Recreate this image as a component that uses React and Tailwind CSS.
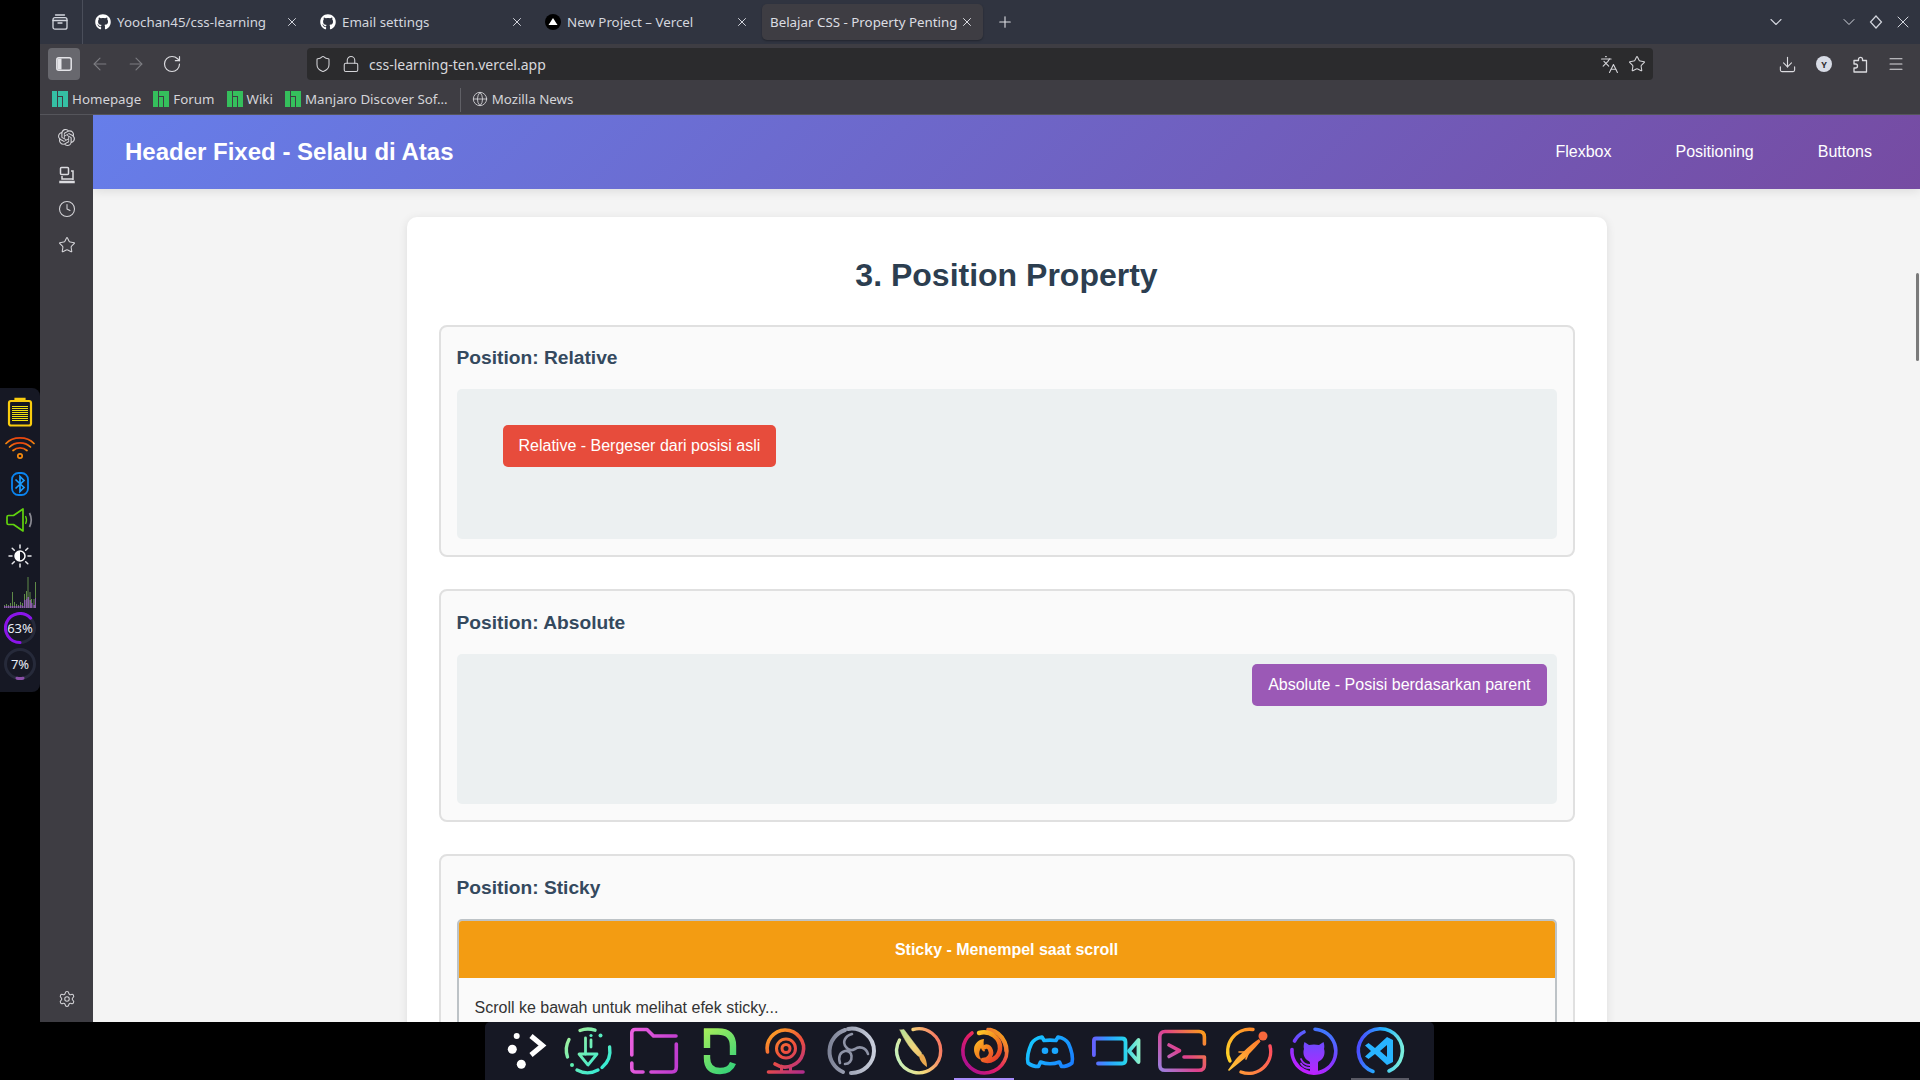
import React from "react";
import { ArrowLeft, ArrowRight, RotateCw, Shield, Lock, Languages, Star, Download, Menu, Clock, Settings, ChevronDown, X, Plus, Globe } from "lucide-react";
import { FaGithub } from "react-icons/fa";
import { SiOpenai } from "react-icons/si";

function Grad({ id, stops, x1 = 0, y1 = 0, x2 = 48, y2 = 48 }) {
  return (
    <linearGradient id={id} gradientUnits="userSpaceOnUse" x1={x1} y1={y1} x2={x2} y2={y2}>
      {stops.map((c, i) => (
        <stop key={i} offset={i / (stops.length - 1)} stopColor={c} />
      ))}
    </linearGradient>
  );
}

function DockSvg({ children }) {
  return (
    <svg width="48" height="48" viewBox="0 0 48 48" fill="none" strokeLinecap="round" strokeLinejoin="round" className="shrink-0 overflow-visible">
      {children}
    </svg>
  );
}

function IconLauncher() {
  return (
    <DockSvg>
      <g transform="translate(4 0)">
        <circle cx="14.7" cy="9" r="3" fill="#fff" />
        <circle cx="10.3" cy="22.3" r="4.5" fill="#fff" />
        <circle cx="19.3" cy="37.3" r="4.5" fill="#fff" />
        <path d="M29 9 L40.5 18.5 L29 28" stroke="#fff" strokeWidth="5" strokeLinecap="butt" strokeLinejoin="miter" />
      </g>
    </DockSvg>
  );
}

function IconDownload() {
  return (
    <DockSvg>
      <defs><Grad id="g-dl" stops={["#a8f09a", "#2bead9"]} x1={4} y1={4} x2={44} y2={44} /></defs>
      <g stroke="url(#g-dl)" strokeWidth="3.4">
        <path d="M16 3.5 A22 22 0 0 1 31 3.2" />
        <path d="M3.5 30 A22 22 0 0 1 5 12.5" />
        <path d="M38 40.5 A22 22 0 0 0 45.6 20" />
        <path d="M13 43 A22 22 0 0 0 34 43" />
        <path d="M21.5 11 V27 M27 13 V20" strokeWidth="2.8" />
        <path d="M15 27 H33 L24 38 Z" strokeWidth="2.8" />
      </g>
      <circle cx="36.5" cy="8.5" r="2" fill="#58ecc0" />
      <circle cx="8" cy="38" r="2" fill="#5ef0b0" />
      <circle cx="27" cy="8.5" r="1.6" fill="#58ecc0" />
    </DockSvg>
  );
}

function IconFolder() {
  return (
    <DockSvg>
      <defs><Grad id="g-fo" stops={["#e85ede", "#bf3ccf"]} x1={0} y1={20} x2={48} y2={30} /></defs>
      <g stroke="url(#g-fo)" strokeWidth="3.6">
        <path d="M1.8 28 V6 Q1.8 2.5 5 2.5 H17 L23.5 9 H46" />
        <path d="M46.3 17 V40 Q46.3 45 42 45 H21" />
        <path d="M13 45 H6 Q1.8 45 1.8 41 V36" />
      </g>
    </DockSvg>
  );
}

function IconGreen() {
  return (
    <DockSvg>
      <defs><Grad id="g-gr" stops={["#a4ec5c", "#2fd07a"]} x1={8} y1={4} x2={40} y2={44} /></defs>
      <g stroke="url(#g-gr)" strokeWidth="6.4" strokeLinecap="butt">
        <path d="M11 1.5 V21 M8 4.5 H22 Q37 4.5 37 19 V28" />
        <path d="M11 28 V31 Q11 44 24 44 Q34 44 37 36" />
      </g>
    </DockSvg>
  );
}

function IconWebcam() {
  return (
    <DockSvg>
      <defs><Grad id="g-wc" stops={["#ffb020", "#f0503c", "#b02c8c"]} x1={6} y1={2} x2={40} y2={46} /></defs>
      <g stroke="url(#g-wc)" strokeWidth="3.6">
        <path d="M5.500 25 A18.500 18.500 0 0 1 23 3 A18.500 18.500 0 1 1 13 37" />
        <circle cx="24" cy="21.500" r="9.500" strokeWidth="3" />
        <circle cx="24" cy="21.500" r="4" strokeWidth="3" />
        <path d="M19.500 39 V44 M28.500 39 V44" strokeWidth="3" />
        <path d="M6.500 45 H41" strokeWidth="3.600" />
      </g>
    </DockSvg>
  );
}

function IconObs() {
  return (
    <DockSvg>
      <defs><Grad id="g-ob" stops={["#7f8498", "#c9cedc"]} x1={2} y1={24} x2={46} y2={24} /></defs>
      <g stroke="url(#g-ob)">
        <path d="M17 3 A22.5 22.5 0 0 0 15 45" strokeWidth="4" />
        <path d="M23 46 A22.5 22.5 0 0 0 46 24 A22.5 22.5 0 0 0 20 1.9" strokeWidth="4" />
      </g>
      <g stroke="#8e93a6" strokeWidth="2.600">
        <path d="M24 7 C17 9 14 15 18 20 C20 23 23 24 27 22 C31 19 38 20 40 27" />
        <path d="M12 36 C10 30 12 25 17 24 C20 23.500 23 25 23.500 29 C24 34 21 37 17 37" />
      </g>
    </DockSvg>
  );
}

function IconBrush() {
  return (
    <DockSvg>
      <defs>
        <Grad id="g-br" stops={["#c2f3c0", "#f5d97a", "#f87b62"]} x1={2} y1={34} x2={46} y2={20} />
        <Grad id="g-br2" stops={["#b4e49a", "#f2d47a", "#e9a84e"]} x1={6} y1={3} x2={33} y2={40} />
      </defs>
      <path d="M19 2.500 A22 22 0 1 1 5.500 13" stroke="url(#g-br)" strokeWidth="3.400" />
      <path d="M6 3 L10 2.500 L27 25 C29 28 27.500 31 24 29 C18 24 10 13 6 3 Z" fill="url(#g-br2)" stroke="#d7cf8a" strokeWidth="0.500" />
      <path d="M25 29 L29 27 C32 31 33 36 33 40 C30 38 26 35 25 29 Z" fill="#e9a84e" />
    </DockSvg>
  );
}

function IconFirefox() {
  return (
    <DockSvg>
      <defs>
        <Grad id="g-ff" stops={["#f6a21c", "#e61f63", "#a80e94"]} x1={44} y1={8} x2={6} y2={42} />
        <Grad id="g-ff2" stops={["#ffd12a", "#f58a1f", "#e83b2d"]} x1={12} y1={8} x2={36} y2={34} />
      </defs>
      <path d="M12 6 A22 22 0 1 0 30 2.500" stroke="url(#g-ff)" strokeWidth="3.600" />
      <path d="M28 2.500 A22 22 0 0 1 46 24" stroke="url(#g-ff)" strokeWidth="3.600" />
      <path d="M19 6 C30 3 41 11 40 22 C39 31 30 36 23 33 C29 33 33 27 30 22 C29 20 27 19 25 20" stroke="url(#g-ff2)" strokeWidth="4.500" />
      <path d="M24 12 C20 12 14 16 14 22 C14 28 17 32 22 33 C18 29 19 24 21 21 C22 24 24 25 25 24 C24 20 23 16 24 12 Z" fill="url(#g-ff2)" />
    </DockSvg>
  );
}

function IconDiscord() {
  return (
    <DockSvg>
      <defs><Grad id="g-dc" stops={["#16d0ff", "#1a7bff"]} x1={2} y1={8} x2={46} y2={40} /></defs>
      <path d="M16 10 C11 11 7.500 13 5.500 16.500 C2 24 1 31 2 36 C5 38.500 9 39.500 12.500 39.500 L14.500 35 C20 37 28 37 33.500 35 L35.500 39.500 C39 39.500 43 38.500 46 36 C47 31 46 24 42.500 16.500 C40.500 13 37 11 32 10 L30 13.500 C26 13 22 13 18 13.500 Z" stroke="url(#g-dc)" strokeWidth="3.600" />
      <circle cx="19" cy="23.700" r="3.300" fill="#1aa8ff" />
      <circle cx="29" cy="23.700" r="3.300" fill="#1aa8ff" />
    </DockSvg>
  );
}

function IconVideo() {
  return (
    <DockSvg>
      <defs><Grad id="g-vd" stops={["#6a5cff", "#2f9cff", "#23d0f0", "#90f0c8"]} x1={0} y1={24} x2={48} y2={24} /></defs>
      <g stroke="url(#g-vd)" strokeWidth="3.800">
        <path d="M1.900 28 V14 Q1.900 11.500 4 11.500 H30 Q33.500 11.500 33.500 15 V33 Q33.500 36.500 30 36.500 H6" />
        <path d="M37 24 L46.500 13 V35 Z" />
      </g>
    </DockSvg>
  );
}

function IconTerminal() {
  return (
    <DockSvg>
      <defs><Grad id="g-tm" stops={["#9a80e0", "#e0408c", "#fb9a1c"]} x1={2} y1={44} x2={46} y2={6} /></defs>
      <g stroke="url(#g-tm)" strokeWidth="3.600">
        <path d="M46.400 17 V10 Q46.400 4.500 41 4.500 H7 Q1.800 4.500 1.800 10 V38 Q1.800 43.300 7 43.300 H41 Q46.400 43.300 46.400 38 V30 H26" />
        <path d="M11 18 L21.500 23.700 L11 29.500" />
      </g>
    </DockSvg>
  );
}

function IconPostman() {
  return (
    <DockSvg>
      <defs>
        <Grad id="g-pm" stops={["#ffd028", "#ff8a28"]} x1={2} y1={26} x2={28} y2={2} />
        <Grad id="g-pm2" stops={["#ff9438", "#ff4f5e"]} x1={18} y1={46} x2={46} y2={22} />
        <Grad id="g-pm3" stops={["#ffc83a", "#ff7a2c"]} x1={4} y1={44} x2={36} y2={12} />
      </defs>
      <path d="M6 34 A22 22 0 0 1 29 2.500" stroke="url(#g-pm)" strokeWidth="3.400" />
      <path d="M46 19 A22 22 0 0 1 17 45" stroke="url(#g-pm2)" strokeWidth="3.400" />
      <circle cx="39" cy="9" r="4.500" fill="#f8673c" />
      <path d="M35 12 L36.500 14.500 C30 22 23 30 15 36 L5 44 L4 43 L12 32 C19 25 27 17 35 12 Z" fill="url(#g-pm3)" />
      <path d="M15 25 L22 25 M22 32 L24 27" stroke="#ff9a32" strokeWidth="1.600" />
    </DockSvg>
  );
}

function IconGithub() {
  return (
    <DockSvg>
      <defs>
        <Grad id="g-gh" stops={["#3b7cff", "#7a3cff", "#c41cff"]} x1={34} y1={2} x2={14} y2={46} />
        <Grad id="g-gh2" stops={["#6a4cff", "#b925ff"]} x1={24} y1={14} x2={24} y2={46} />
      </defs>
      <path d="M25 2.200 A22 22 0 0 1 38 41 A22 22 0 0 1 2 22.500" stroke="url(#g-gh)" strokeWidth="3.600" />
      <path d="M4.500 14 A22 22 0 0 1 14 5" stroke="url(#g-gh)" strokeWidth="3.600" />
      <path d="M14.500 15 L19 18 C22 17.200 26 17.200 29 18 L33.500 15 C34.500 18 34.500 20 34 22 C35 24 35 30 31 33 C29.500 34 28 34.500 28 36 V45 C25.500 46 22.500 46 20 45 V36 C20 34.500 18.500 34 17 33 C13 30 13 24 14 22 C13.500 20 13.500 18 14.500 15 Z" fill="url(#g-gh2)" />
      <path d="M11 32 C13 37 16 38 20 38 M11 36.500 C13 40 16 41 20 41" stroke="#a22cff" strokeWidth="1.800" />
    </DockSvg>
  );
}

function IconVsCode() {
  return (
    <DockSvg>
      <defs><Grad id="g-vs" stops={["#4b4cff", "#22b4ff", "#7aeedd"]} x1={2} y1={20} x2={46} y2={28} /></defs>
      <path d="M17 44.500 A22 22 0 1 1 33 44" stroke="url(#g-vs)" strokeWidth="3.600" />
      <path fillRule="evenodd" d="M31 10 L37 13 V35 L31 38 L19 27 L12.500 32 L9 29.500 L15 24 L9 18.500 L12.500 16 L19 21 Z M31 18 L24 24 L31 30 Z" fill="#28b4ff" />
    </DockSvg>
  );
}

function SysRow({ children }) {
  return <div className="h-9 w-10 flex items-center justify-center shrink-0">{children}</div>;
}

function Battery() {
  return (
    <svg width="26" height="30" viewBox="0 0 26 30" fill="none">
      <rect x="2" y="4" width="22" height="24.500" rx="2" stroke="#f9cc0e" strokeWidth="2.200" />
      <path d="M8.500 3.500 V1.800 H17.500 V3.500" stroke="#f9cc0e" strokeWidth="2.200" />
      <g stroke="#f0e010" strokeWidth="1">
        {[9.5, 11.5, 13.5, 15.5, 17.5, 19.5, 21.5, 23.5].map((y) => (
          <path key={y} d={`M5 ${y} H21`} />
        ))}
      </g>
    </svg>
  );
}

function Wifi() {
  return (
    <svg width="30" height="26" viewBox="0 0 30 26" fill="none" strokeLinecap="round">
      <defs><linearGradient id="g-wf" x1="0" y1="0" x2="0" y2="1"><stop offset="0" stopColor="#e8430e" /><stop offset="1" stopColor="#f58a0e" /></linearGradient></defs>
      <g stroke="url(#g-wf)" strokeWidth="1.700">
        <path d="M1 8.500 C8 1 22 1 29 8.500" />
        <path d="M4.500 12 C10 6.500 20 6.500 25.500 12" />
        <path d="M8 15.500 C12 12 18 12 22 15.500" />
      </g>
      <circle cx="15" cy="21" r="2.200" stroke="#f58a0e" strokeWidth="1.700" />
    </svg>
  );
}

function Bluetooth() {
  return (
    <svg width="18" height="24" viewBox="0 0 18 24" fill="none">
      <rect x="1" y="1" width="16" height="22" rx="6.500" stroke="#0a84f0" strokeWidth="1.800" />
      <path d="M4.500 7.500 L13 15.500 L9 19.500 V4.500 L13 8.500 L4.500 16.500" stroke="#1a9cff" strokeWidth="1.700" />
    </svg>
  );
}

function Speaker() {
  return (
    <svg width="28" height="24" viewBox="0 0 28 24" fill="none" strokeLinejoin="round">
      <path d="M1 9 Q1 7.500 2.500 7.500 H7.500 L17 1 V23 L7.500 16.500 H2.500 Q1 16.500 1 15 Z" stroke="#62d40e" strokeWidth="1.700" />
      <path d="M19.500 8 Q21.500 12 19.500 16" stroke="#62d40e" strokeWidth="1.300" />
      <path d="M23.500 5 Q27 12 23.500 19" stroke="#8a8a92" strokeWidth="1.700" />
    </svg>
  );
}

function Brightness() {
  return (
    <svg width="24" height="24" viewBox="0 0 24 24" fill="none">
      <circle cx="12" cy="12" r="5" stroke="#fff" strokeWidth="1.500" />
      <path d="M12 7 A5 5 0 0 0 12 17 Z" fill="#fff" />
      <g stroke="#e8e8ec" strokeWidth="1.500" strokeLinecap="round">
        <path d="M12 1 V4 M12 20 V23 M1 12 H4 M20 12 H23 M4.200 4.200 L6.300 6.300 M17.700 17.700 L19.800 19.800 M4.200 19.800 L6.300 17.700 M17.700 6.300 L19.800 4.200" />
      </g>
    </svg>
  );
}

function MiniChart() {
  const bars = [
    [0, 3, 0], [2, 4, 0], [4, 3, 0], [6, 5, 0], [8, 16, 2], [10, 6, 2], [12, 4, 0], [14, 3, 2], [16, 6, 3], [18, 5, 2], [20, 14, 8], [22, 17, 9], [23.5, 31, 11], [25.5, 16, 8], [27, 9, 5], [29.5, 9, 3], [31, 26, 10],
  ];
  return (
    <svg width="32" height="32" viewBox="0 0 32 32">
      {bars.map(([x, g, p]) => (
        <g key={x}>
          <rect x={x} y={32 - g} width="1" height={g} fill="#5f8a48" />
          <rect x={x} y={32 - Math.max(p, 2)} width="1.5" height={Math.max(p, 2)} fill="#8a5fa8" />
        </g>
      ))}
    </svg>
  );
}

function RingGauge({ label, from, to, color }) {
  const r = 14.5;
  const pt = (deg) => {
    const a = ((deg - 90) * Math.PI) / 180;
    return [16 + r * Math.cos(a), 16 + r * Math.sin(a)];
  };
  const [x1, y1] = pt(from);
  const [x2, y2] = pt(to);
  const large = to - from > 180 ? 1 : 0;
  return (
    <div className="relative w-8 h-8 flex items-center justify-center">
      <svg width="32" height="32" viewBox="0 0 32 32" fill="none" className="absolute inset-0">
        <circle cx="16" cy="16" r={r} stroke="#262a3a" strokeWidth="3" />
        <path d={`M${x1} ${y1} A${r} ${r} 0 ${large} 1 ${x2} ${y2}`} stroke={color} strokeWidth="3" strokeLinecap="round" />
      </svg>
      <span className="relative text-[13px] leading-none text-[#e8ecf4] [font-family:'Noto_Sans',sans-serif]">{label}</span>
    </div>
  );
}

function ManjaroIcon({ color = "#35bf5c" }) {
  return (
    <svg width="16" height="16" viewBox="0 0 16 16" fill={color} className="shrink-0">
      <rect x="0" y="0" width="5" height="16" />
      <rect x="6" y="0" width="10" height="5" />
      <rect x="6" y="6" width="4" height="10" />
      <rect x="11" y="0" width="5" height="16" />
    </svg>
  );
}

function VercelIcon() {
  return (
    <svg width="16" height="16" viewBox="0 0 16 16" className="shrink-0">
      <circle cx="8" cy="8" r="8" fill="#000" />
      <path d="M8 4 L12.500 11 H3.500 Z" fill="#fff" />
    </svg>
  );
}

function Slot({ className = "", children }) {
  return <div className={`w-4 h-4 flex items-center justify-center shrink-0 ${className}`}>{children}</div>;
}

function Tab({ icon, label }) {
  return (
    <div className="w-[225px] h-full flex items-center pl-2 pr-[13px] shrink-0">
      {icon}
      <span className="ml-[6px] mt-px text-[13.33px] text-[#d3d6de] whitespace-nowrap">{label}</span>
      <div className="flex-1" />
      <X size={14} strokeWidth={1.7} className="text-[#d3d6de]" />
    </div>
  );
}

function BookmarkItem({ icon, label, className = "" }) {
  return (
    <div className={`flex items-center gap-1 shrink-0 ${className}`}>
      {icon}
      <span className="text-[13.33px] text-[#d4d4d8] whitespace-nowrap">{label}</span>
    </div>
  );
}

function Section({ title, children }) {
  return (
    <section className="border-2 border-[#e0e0e0] rounded-lg bg-[#fafafa] p-4 mb-8">
      <h3 className="text-[19.2px] leading-[30.72px] font-bold text-[#34495e] mt-[0.6px] mb-[15.4px]">{title}</h3>
      {children}
    </section>
  );
}

export default function App() {
  return (
    <div className="w-[1920px] h-[1080px] bg-black overflow-hidden flex flex-col [font-family:'Noto_Sans',sans-serif]">
      <div className="flex h-[1022px] shrink-0">
        {/* system panel */}
        <div className="w-10 shrink-0 pt-[388px]">
          <div className="w-10 h-[304px] bg-[#161824] rounded-r-lg pt-[6px] flex flex-col">
            <SysRow><Battery /></SysRow>
            <SysRow><Wifi /></SysRow>
            <SysRow><Bluetooth /></SysRow>
            <SysRow><Speaker /></SysRow>
            <SysRow><Brightness /></SysRow>
            <SysRow><MiniChart /></SysRow>
            <SysRow><RingGauge label="63%" from={180} to={407} color="#8b14ea" /></SysRow>
            <SysRow><RingGauge label="7%" from={168} to={192} color="#8a4fa8" /></SysRow>
          </div>
        </div>

        {/* browser */}
        <div className="flex-1 flex flex-col min-w-0">
          {/* tab bar */}
          <div className="h-11 bg-[#303440] flex items-center shrink-0">
            <div className="w-[42px] h-full flex items-center justify-center shrink-0 border-r border-[#4a4e5a] box-content">
              <svg width="16" height="16" viewBox="0 0 16 16" fill="none" stroke="#d3d6de" strokeWidth="1.3" strokeLinecap="round" className="-translate-x-px">
                <path d="M3.500 1 H12.500" />
                <rect x="1" y="3.700" width="14" height="11.500" rx="2" />
                <path d="M1 6.500 H15 M6 9 H10" />
              </svg>
            </div>
            <div className="w-1 shrink-0" />
            <Tab icon={<FaGithub size={16} className="text-white shrink-0" />} label="Yoochan45/css-learning" />
            <Tab icon={<FaGithub size={16} className="text-white shrink-0" />} label="Email settings" />
            <Tab icon={<VercelIcon />} label="New Project – Vercel" />
            <div className="w-[221px] h-9 bg-[#3e3d43] rounded-[5px] flex items-center pl-2 pr-[9px] shrink-0 shadow-[0_1px_2px_rgba(0,0,0,0.3)]">
              <span className="mt-px text-[13.33px] text-[#dcdde2] whitespace-nowrap">Belajar CSS - Property Penting</span>
              <div className="flex-1" />
              <X size={14} strokeWidth={1.7} className="text-[#dcdde2]" />
            </div>
            <Plus size={18} strokeWidth={1.5} className="text-[#dcdde2] ml-[13px]" />
            <div className="flex-1" />
            <ChevronDown size={20} strokeWidth={1.3} className="text-[#d3d6de] mr-[53px]" />
            <div className="flex items-center gap-[7px] pr-[7px]">
              <ChevronDown size={20} strokeWidth={1.2} className="text-[#d3d6de]" />
              <svg width="20" height="20" viewBox="0 0 20 20" fill="none" stroke="#d3d6de" strokeWidth="1.2"><path d="M10 4 L15.500 10 L10 16 L4.500 10 Z" /></svg>
              <X size={20} strokeWidth={1.2} className="text-[#d3d6de]" />
            </div>
          </div>

          {/* nav bar */}
          <div className="h-9 bg-[#3e3d43] flex items-center pl-2 pt-1 shrink-0">
            <div className="w-8 h-8 bg-[#68686e] rounded-[4px] flex items-center justify-center shrink-0">
              <svg width="16" height="16" viewBox="0 0 16 16" fill="none">
                <rect x="0.800" y="1.800" width="14.400" height="12.400" rx="2" stroke="#e4e4e8" strokeWidth="1.500" />
                <rect x="1.500" y="2.500" width="4" height="11" fill="#e4e4e8" />
              </svg>
            </div>
            <Slot className="ml-3"><ArrowLeft size={20} strokeWidth={1.3} className="text-[#7c7c82] shrink-0" /></Slot>
            <Slot className="ml-5"><ArrowRight size={20} strokeWidth={1.3} className="text-[#7c7c82] shrink-0" /></Slot>
            <Slot className="ml-5"><RotateCw size={20} strokeWidth={1.4} className="text-[#dcdce0] shrink-0" /></Slot>
            <div className="ml-[127px] w-[1346px] h-8 bg-[#2b2b2d] rounded-[4px] flex items-center pl-2 pr-2 shrink-0">
              <Slot><Shield size={18} strokeWidth={1.4} className="text-[#d4d4d8] shrink-0" /></Slot>
              <Slot className="ml-3"><Lock size={18} strokeWidth={1.4} className="text-[#d4d4d8] shrink-0" /></Slot>
              <span className="ml-[10px] text-[14px] text-[#d8d8dc] whitespace-nowrap">css-learning-ten.vercel.app</span>
              <div className="flex-1" />
              <Slot><Languages size={19} strokeWidth={1.4} className="text-[#d4d4d8] shrink-0" /></Slot>
              <Slot className="ml-3"><Star size={18} strokeWidth={1.4} className="text-[#d4d4d8] shrink-0" /></Slot>
            </div>
            <Slot className="ml-[126px]"><Download size={19} strokeWidth={1.4} className="text-[#dcdce0] shrink-0" /></Slot>
            <div className="ml-[21px] w-4 h-4 rounded-full bg-[#d8dce6] flex items-center justify-center shrink-0">
              <span className="text-[9px] leading-none font-bold text-[#2b2b2d]">Y</span>
            </div>
            <Slot className="ml-5">
              <svg width="16" height="17" viewBox="0 0 16 17" fill="none" stroke="#dcdce0" strokeWidth="1.300" strokeLinejoin="round" className="shrink-0">
                <path d="M6.500 4 V2.800 A2 2 0 0 1 10.500 2.800 V4 H14.500 V15.500 H2 V11.500 H3.500 A2 2 0 0 0 3.500 7.500 H2 V4 Z" transform="translate(0 0.500)" />
              </svg>
            </Slot>
            <Slot className="ml-5"><Menu size={18} strokeWidth={1.4} className="text-[#dcdce0] shrink-0" /></Slot>
          </div>

          {/* bookmarks */}
          <div className="h-[35px] bg-[#3e3d43] border-b border-[#55555b] flex items-center pl-3 pt-[5px] shrink-0">
            <BookmarkItem icon={<ManjaroIcon color="#35bfa4" />} label="Homepage" />
            <BookmarkItem icon={<ManjaroIcon />} label="Forum" className="ml-3" />
            <BookmarkItem icon={<ManjaroIcon />} label="Wiki" className="ml-3" />
            <BookmarkItem icon={<ManjaroIcon />} label="Manjaro Discover Sof…" className="ml-3" />
            <div className="w-px h-6 bg-[#606066] ml-3 shrink-0" />
            <BookmarkItem icon={<Globe size={16} strokeWidth={1.3} className="text-[#d4d4d8] shrink-0" />} label="Mozilla News" className="ml-[11px]" />
          </div>

          {/* content row */}
          <div className="flex-1 flex min-h-0">
            <div className="w-[53px] bg-[#3e3d43] shrink-0 flex flex-col items-center pt-[14px] pb-[14px]">
              <SiOpenai size={17} className="text-[#d4d4d8] mb-5" />
              <svg width="18" height="18" viewBox="0 0 18 18" fill="none" stroke="#dcdce0" strokeWidth="1.500" className="mb-4">
                <rect x="2.500" y="1.500" width="8" height="7" rx="1" />
                <path d="M13 5 H15 V14 M2 15.500 H16 V16.500 H2 Z M4 10 V13 H15" />
              </svg>
              <Clock size={18} strokeWidth={1.4} className="text-[#d4d4d8] mb-[18px]" />
              <Star size={18} strokeWidth={1.4} className="text-[#d4d4d8]" />
              <div className="flex-1" />
              <Settings size={18} strokeWidth={1.4} className="text-[#d4d4d8]" />
            </div>

            <main className="relative flex-1 bg-[#f4f4f4] overflow-hidden min-w-0 [font-family:'Liberation_Sans',sans-serif] text-[16px] leading-[25.6px] text-[#333333]">
              <header className="h-[74px] flex items-center pl-8 pr-12 bg-[linear-gradient(135deg,#667eea,#764ba2)] shadow-[0_2px_10px_rgba(0,0,0,0.1)] relative">
                <h1 className="text-[24px] font-bold text-white">Header Fixed - Selalu di Atas</h1>
                <div className="flex-1" />
                <nav className="flex gap-16 text-white">
                  <span>Flexbox</span>
                  <span>Positioning</span>
                  <span>Buttons</span>
                </nav>
              </header>

              <div className="w-[1200px] mx-auto mt-[28.4px] bg-white rounded-[10px] shadow-[0_2px_10px_rgba(0,0,0,0.1)] px-8 pb-8 pt-[32.4px] h-[1000px]">
                <h2 className="text-[32px] leading-[51.2px] font-bold text-[#2c3e50] text-center mb-[23.6px]">3. Position Property</h2>

                <Section title="Position: Relative">
                  <div className="h-[150px] bg-[#ecf0f1] rounded-[5px] pl-[46px] pt-9">
                    <div className="inline-block px-4 py-2 bg-[#e74c3c] text-white rounded-[5px]">Relative - Bergeser dari posisi asli</div>
                  </div>
                </Section>

                <Section title="Position: Absolute">
                  <div className="h-[150px] bg-[#ecf0f1] rounded-[5px] pr-[10px] pt-[10px] flex justify-end items-start">
                    <div className="px-4 py-2 bg-[#9b59b6] text-white rounded-[5px]">Absolute - Posisi berdasarkan parent</div>
                  </div>
                </Section>

                <Section title="Position: Sticky">
                  <div className="h-[200px] border-2 border-[#bdc3c7] rounded-[5px] overflow-hidden">
                    <div className="p-4 bg-[#f39c12] text-white font-bold text-center">Sticky - Menempel saat scroll</div>
                    <div className="px-4 pt-[16.6px]">Scroll ke bawah untuk melihat efek sticky...</div>
                  </div>
                </Section>
              </div>

              {/* page scrollbar */}
              <div className="absolute right-px top-[158px] w-[3px] h-[88px] rounded-full bg-[#7a7a7a]" />
            </main>
          </div>
        </div>
      </div>

      {/* dock */}
      <div className="h-[58px] flex justify-center shrink-0 pr-px">
        <div className="relative w-[949px] h-[58px] bg-[#161824] rounded-t-[5px] flex items-start gap-[18px] pl-[13px] pt-[5px]">
          <IconLauncher />
          <IconDownload />
          <IconFolder />
          <IconGreen />
          <IconWebcam />
          <IconObs />
          <IconBrush />
          <IconFirefox />
          <IconDiscord />
          <IconVideo />
          <IconTerminal />
          <IconPostman />
          <IconGithub />
          <IconVsCode />
          <div className="absolute bottom-0 left-[469px] w-[60px] h-[2px] bg-[#a78bfa]" />
          <div className="absolute bottom-0 left-[866px] w-[58px] h-[2px] bg-[#5a5a65]" />
        </div>
      </div>
    </div>
  );
}
